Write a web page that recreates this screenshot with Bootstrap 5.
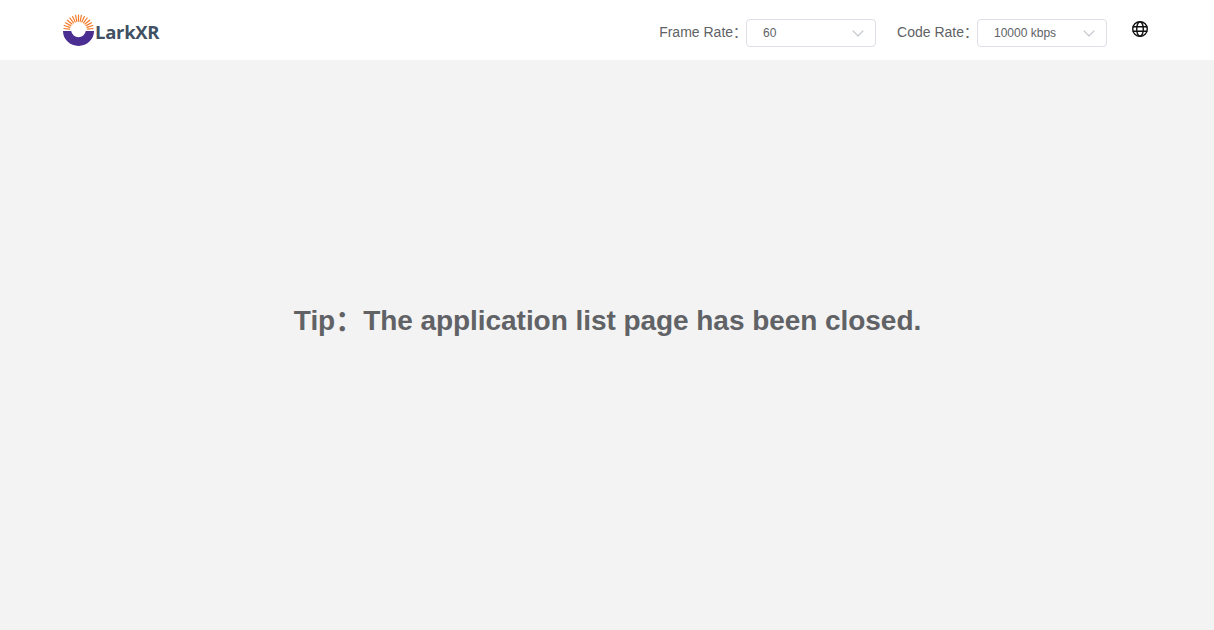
<!DOCTYPE html>
<html lang="en">
<head>
<meta charset="utf-8">
<title>LarkXR</title>
<link rel="stylesheet" href="https://cdn.jsdelivr.net/npm/bootstrap@5.3.0/dist/css/bootstrap.min.css">
<style>
html,body{height:100%}
body{background:#f3f3f3;font-family:"Liberation Sans","Noto Sans CJK SC",sans-serif;overflow:hidden}
.lx-page{height:630px}
.lx-head{height:60px;background:#fff;padding:0 65px 0 62px}
.lx-logo{margin-top:-1px}
.lx-word{font-family:"Open Sans",sans-serif;font-weight:700;font-size:18.5px;line-height:24px;color:#3f5163;letter-spacing:-.3px;position:relative;top:2px}
.lx-right{padding-top:6px}
.lx-label{font-size:14px;line-height:20px;color:#606266;white-space:nowrap;margin:-2px -1px 0 0}
.lx-colon{line-height:1;vertical-align:-.03em}
.lx-select{width:130px;height:28px;border:1px solid #dcdfe6;border-radius:4px;background:#fff;padding:0 11px 0 16px;font-size:12px;color:#606266}
.lx-ctrl{margin-right:21px}
.lx-ctrl-last{margin-right:24px}
.lx-globe{margin-top:-8px}
.lx-tip{font-size:28px;font-weight:700;color:#606266;line-height:40px;margin:0;letter-spacing:-.05px;padding-left:1px}
.lx-main{height:570px;padding-bottom:48px}
</style>
</head>
<body>
<div class="lx-page d-flex flex-column">
  <header class="lx-head d-flex align-items-center justify-content-between">
    <div class="lx-logo d-flex align-items-center">
      <svg width="33" height="33" viewBox="0 0 33 33" aria-hidden="true">
        <g stroke="#f47b2a" stroke-width="1.2" stroke-linecap="round">
          <path d="M2 15.5L7.5 16.2"/><path d="M2.2 12.5L8 14.4"/><path d="M3.5 9.8L8.8 12.6"/><path d="M5.3 7.2L10 11"/><path d="M7.8 5L11.5 9.8"/><path d="M10.6 3.5L13.2 9"/><path d="M13.6 2.4L14.8 8.4"/><path d="M16.5 2V8.2"/><path d="M19.4 2.4L18.2 8.4"/><path d="M22.4 3.5L19.8 9"/><path d="M25.2 5L21.5 9.8"/><path d="M27.7 7.2L23 11"/><path d="M29.5 9.8L24.2 12.6"/><path d="M30.8 12.5L25 14.4"/><path d="M31 15.5L25.5 16.2"/>
        </g>
        <path d="M1 18H9.2A7.4 7.4 0 0 0 23.8 18H32A15.5 15 0 0 1 1 18Z" fill="#4b2e91"/>
      </svg>
      <span class="lx-word">LarkXR</span>
    </div>
    <div class="lx-right d-flex align-items-center">
      <div class="lx-ctrl d-flex align-items-center">
        <span class="lx-label">Frame Rate<span class="lx-colon">：</span></span>
        <div class="lx-select d-flex align-items-center justify-content-between"><span>60</span>
          <svg width="12" height="7" viewBox="0 0 12 7" aria-hidden="true"><path d="M.7.7L6 6L11.3.7" fill="none" stroke="#c0c4cc" stroke-width="1.2"/></svg>
        </div>
      </div>
      <div class="lx-ctrl-last d-flex align-items-center">
        <span class="lx-label">Code Rate<span class="lx-colon">：</span></span>
        <div class="lx-select d-flex align-items-center justify-content-between"><span>10000 kbps</span>
          <svg width="12" height="7" viewBox="0 0 12 7" aria-hidden="true"><path d="M.7.7L6 6L11.3.7" fill="none" stroke="#c0c4cc" stroke-width="1.2"/></svg>
        </div>
      </div>
      <svg class="lx-globe" width="18" height="18" viewBox="0 0 18 18" aria-hidden="true" fill="none" stroke="#111" stroke-width="1.4">
        <circle cx="9" cy="9" r="7.3"/><ellipse cx="9" cy="9" rx="3.3" ry="7.3"/><path d="M1.7 6.8H16.3M1.7 11.2H16.3"/>
      </svg>
    </div>
  </header>
  <main class="lx-main d-flex align-items-center justify-content-center">
    <p class="lx-tip">Tip<span class="lx-colon">：</span>The application list page has been closed.</p>
  </main>
</div>
</body>
</html>
